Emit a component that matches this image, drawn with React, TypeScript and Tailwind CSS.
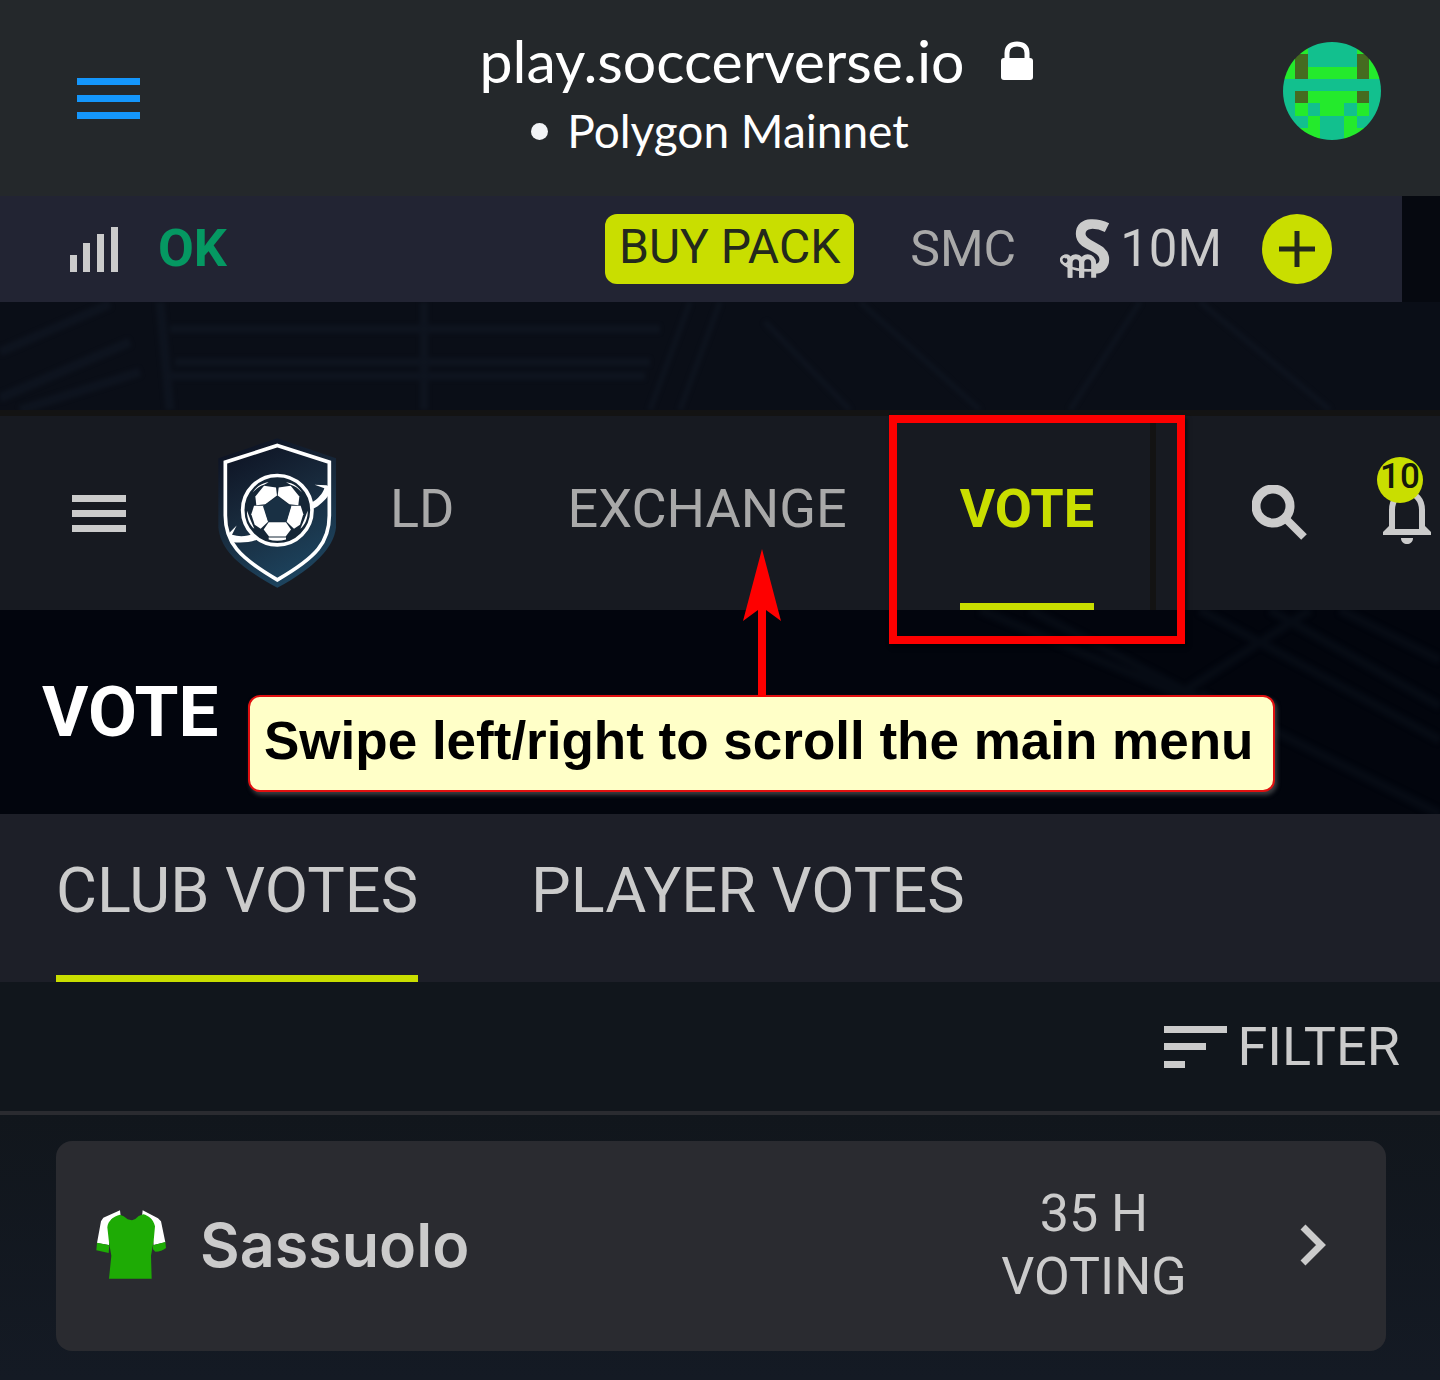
import React from "react";

function MenuLines({ className }: { className: string }) {
  return (
    <span className={className} aria-hidden="true">
      <span className="h-[7px] bg-current" />
      <span className="h-[7px] bg-current" />
      <span className="h-[7px] bg-current" />
    </span>
  );
}

const FILLS: Record<string, string> = { t: "#12c08e", g: "#24ea2c", o: "#456b20" };
const AVATAR = ["ggttttgg", "gottttog", "goggggog", "tttttttt", "toggggot", "tgtggtgt", "ttgttgtt", "tggttggt"];

function Avatar() {
  return (
    <svg viewBox="0 0 8 8" className="size-[98px] rounded-full" shapeRendering="crispEdges" aria-hidden="true">
      {AVATAR.map((row, y) =>
        row.split("").map((c, x) => <rect key={`${x}-${y}`} x={x} y={y} width="1" height="1" fill={FILLS[c]} />),
      )}
    </svg>
  );
}

function SignalIcon() {
  return (
    <svg viewBox="0 0 48 45" className="h-[45px] w-12" fill="#cbcbcb" aria-hidden="true">
      <rect x="0" y="28" width="7" height="17" />
      <rect x="13" y="16" width="7" height="29" />
      <rect x="27" y="7" width="7" height="38" />
      <rect x="41" y="0" width="7" height="45" />
    </svg>
  );
}

/* Currency emblem: a ribbon curve resting on three looped stems. */
function CoinIcon() {
  return (
    <svg viewBox="28 27 150 180" className="h-[60px] w-[50px]" fill="none" stroke="#cbcbcb" aria-hidden="true">
      <path
        d="M169 53C145 41 90 30 90 72C90 110 161 108 161 148C161 168 148 177 132 177"
        strokeWidth="29"
      />
      <path d="M134 180C100 184 54 178 35 158C24 144 42 132 52 144C60 156 46 168 38 160" strokeWidth="8" />
      <path d="M40 141C50 134 60 142 59 156V203" strokeWidth="11" />
      <path d="M58 203V160C58 134 93 134 93 160V203" strokeWidth="15" />
      <path d="M93 203V160C93 134 129 134 129 160V203" strokeWidth="15" />
    </svg>
  );
}

function ClubCrest() {
  return (
    <svg viewBox="84 38 354 449" className="h-[150px] w-[118px]" aria-hidden="true">
      <defs>
        <linearGradient id="crest" x1="0.2" y1="0" x2="0.6" y2="1">
          <stop offset="0" stopColor="#0d1222" />
          <stop offset="0.45" stopColor="#18293b" />
          <stop offset="1" stopColor="#1d4560" />
        </linearGradient>
      </defs>
      <path d="M262 38L438 98V305C432 365 375 425 262 487C150 425 92 375 85 305V98Z" fill="url(#crest)" />
      <path
        d="M262 60L418 110V270C418 350 380 395 262 463C145 395 106 350 106 270V110Z"
        fill="none"
        stroke="#fff"
        strokeWidth="11"
      />
      <circle cx="262" cy="254" r="104" fill="#152636" stroke="#fff" strokeWidth="11" />
      <g fill="#fff">
        <path d="M374 178L410 179L418 184V206C404 226 388 240 370 250L364 232C384 220 398 204 403 188Z" />
        <path d="M140 300L126 328C150 335 172 332 192 325L202 342C180 352 150 352 128 350L116 324Z" />
        <path d="M222 181L258 186L261 210L226 236L199 239L196 213Z" />
        <path d="M302 181L266 186L263 210L298 236L325 239L328 213Z" />
        <path d="M192 241L221 241L235 288L212 310L194 298L184 266Z" />
        <path d="M332 241L303 241L289 288L312 310L330 298L340 266Z" />
        <path d="M236 290L288 290L303 312L287 333L237 333L221 312Z" />
        <path d="M188 201C198 184 215 172 236 170L222 178C208 182 200 189 188 201Z" />
        <path d="M336 201C326 184 309 172 288 170L302 178C316 182 324 189 336 201Z" />
        <path d="M171 256L181 282L193 310C178 298 170 278 171 256Z" />
        <path d="M353 256L343 282L331 310C346 298 354 278 353 256Z" />
        <path d="M236 336L288 336V342C270 347 252 347 236 342Z" />
      </g>
      <path d="M262 213L304 242L290 289H234L219 242Z" fill="#193044" />
    </svg>
  );
}

function SearchIcon() {
  return (
    <svg viewBox="0 0 56 56" className="size-14" fill="none" stroke="#cbcbcb" aria-hidden="true">
      <circle cx="21" cy="21" r="17" strokeWidth="9" />
      <path d="M34 34L52 52" strokeWidth="8" />
    </svg>
  );
}

function BellIcon() {
  return (
    <svg viewBox="0 0 48 62" className="h-[62px] w-12" aria-hidden="true">
      <path d="M9 50V28C9 18 15 11 24 11S39 18 39 28V50" fill="none" stroke="#cbcbcb" strokeWidth="6" />
      <path d="M0 53V50L8 42V47H40V42L48 50V53Z" fill="#cbcbcb" />
      <path d="M18 56H30C30 60 27 62 24 62S18 60 18 56Z" fill="#cbcbcb" />
    </svg>
  );
}

function Shirt() {
  return (
    <svg viewBox="288 273 210 207" className="h-[69px] w-[70px]" aria-hidden="true">
      <path d="M360 274L310 296L303 307L291 372L327 378L335 300L362 292Z" fill="#fff" />
      <path d="M428 274L474 298L483 307L496 370L461 378L452 300L426 292Z" fill="#fff" />
      <path
        d="M360 287L371 292L383 301L396 304L406 300L416 291L430 286C445 290 460 300 465 322L461 365L453 410L455 479H327L334 410L327 370L322 325C324 305 340 292 360 287Z"
        fill="#1eab05"
      />
      <path d="M291 371L328 379L326 402L289 394Z" fill="#1eab05" />
      <path d="M459 379L496 369L498 387C490 394 478 398 466 398L459 391Z" fill="#1eab05" />
    </svg>
  );
}

/* Faint roof beams of a stadium behind the page. */
function StadiumBeams() {
  return (
    <svg
      viewBox="0 0 1440 108"
      preserveAspectRatio="none"
      className="absolute inset-0 size-full opacity-60"
      fill="none"
      stroke="#111824"
      aria-hidden="true"
    >
      <g className="blur-[2px]">
        <path d="M0 50L110 2M0 96L130 40M20 108L140 70M160 0L170 108" strokeWidth="9" />
        <path d="M170 27H660M175 60H650M170 74H645M424 0V108" strokeWidth="8" />
        <path d="M690 0L650 108M720 0L680 108M765 20L850 108M860 0L980 108M1140 0L1070 108M1200 0L1330 108" strokeWidth="5" />
      </g>
    </svg>
  );
}

function SeatBeams() {
  return (
    <svg
      viewBox="0 0 500 204"
      className="absolute top-0 right-0 h-full w-[500px]"
      fill="none"
      stroke="#060b14"
      strokeWidth="9"
      aria-hidden="true"
    >
      <path
        className="blur-[2px]"
        d="M40 0L240 84M90 0L290 104M240 84L370 0M260 0L500 130M330 0L500 96M260 84L500 204M400 0L500 50"
      />
    </svg>
  );
}

export default function App() {
  return (
    <div className="min-h-screen bg-[#11161c] font-['Roboto',sans-serif] text-[#cbcbcb]">
      <header className="grid h-[196px] grid-cols-[1fr_auto_1fr] items-center bg-[#24282b] text-white">
        <button aria-label="Browser menu" className="ml-[77px] w-[63px] text-[#1496fb]">
          <MenuLines className="flex w-full flex-col gap-[10px]" />
        </button>
        <div className="flex flex-col items-center pb-[6px] font-['Lato',sans-serif]">
          <div className="ml-[72px] flex items-center gap-9">
            <span className="text-[59px] leading-[72px]">play.soccerverse.io</span>
            <svg viewBox="0 0 32 40" className="h-10 w-8" aria-label="Secure" role="img">
              <path d="M6 17V12C6 6 10 3 16 3S26 6 26 12V17" fill="none" stroke="#fff" strokeWidth="5" />
              <rect y="17" width="32" height="22" rx="3" fill="#fff" />
            </svg>
          </div>
          <div className="flex items-center gap-[19px]">
            <span className="size-[17px] rounded-full bg-[#f2f4f6]" />
            <span className="text-[46px] leading-[68px]">Polygon Mainnet</span>
          </div>
        </div>
        <button aria-label="Account" className="mr-[59px] mb-[14px] justify-self-end">
          <Avatar />
        </button>
      </header>

      <div className="bg-[#060910] pr-[38px]">
        <div className="flex h-[106px] items-center bg-[#222433] pr-[70px] pl-[70px]">
          <SignalIcon />
          <span className="ml-10 text-[52px] leading-[60px] font-bold text-[#059862]">OK</span>
          <button className="ml-auto h-[70px] rounded-xl bg-[#c9de00] px-[14px] pb-1 text-[48px] leading-[60px] text-[#23291c]">
            BUY PACK
          </button>
          <span className="ml-14 text-[50px] leading-[60px] text-[#a9a9a9]">SMC</span>
          <span className="ml-11 flex items-center gap-[10px] text-[51px] leading-[60px]">
            <CoinIcon />
            10M
          </span>
          <button aria-label="Add funds" className="ml-10 grid size-[70px] place-items-center rounded-full bg-[#c9de00]">
            <svg viewBox="0 0 36 36" className="size-9" stroke="#23291c" strokeWidth="5" aria-hidden="true">
              <path d="M18 0V36M0 18H36" />
            </svg>
          </button>
        </div>
      </div>

      <div className="relative h-[114px] border-b-[6px] border-[#131313] bg-[#0a0e17]">
        <StadiumBeams />
      </div>

      <nav className="flex h-[194px] items-center bg-[#171a21] text-[#a9a9a9]">
        <button aria-label="Main menu" className="ml-[72px] w-[54px] shrink-0 text-[#cbcbcb]">
          <MenuLines className="flex w-full flex-col gap-2" />
        </button>
        <a href="#home" aria-label="Home" className="ml-[92px] shrink-0">
          <ClubCrest />
        </a>
        <div className="flex h-full flex-1 items-stretch gap-[113px] border-r-[6px] border-[#131313] pl-[54px] text-[54px] leading-[186px]">
          <a href="#world">LD</a>
          <a href="#exchange">EXCHANGE</a>
          <a href="#vote" aria-current="page" className="relative border-b-[7px] border-[#c9de00] font-bold text-[#c9de00]">
            VOTE
            <span className="pointer-events-none absolute -top-px -right-[91px] -bottom-[41px] -left-[71px] z-10 border-8 border-[#fe0000] shadow-[2px_3px_4px_rgba(0,0,0,0.6)]" />
          </a>
        </div>
        <button aria-label="Search" className="ml-24 shrink-0">
          <SearchIcon />
        </button>
        <button aria-label="10 notifications" className="relative mr-[9px] ml-[75px] shrink-0">
          <BellIcon />
          <span className="absolute -top-[25px] -left-[6px] grid size-[46px] place-items-center rounded-full bg-[#c9de00] pb-[6px] text-[35px] leading-[40px] font-medium text-[#15180b]">
            10
          </span>
        </button>
      </nav>

      <section className="relative flex h-[204px] items-center bg-[#02050d]">
        <SeatBeams />
        <h1 className="ml-[42px] w-[206px] text-[71px] leading-[80px] font-bold text-white">VOTE</h1>
        <div
          role="note"
          className="relative mt-[85px] mb-[22px] rounded-xl border-2 border-[#e01010] bg-[#ffffc8] pt-3 pr-5 pb-[17px] pl-[14px] font-['Liberation_Sans',sans-serif] text-[53px] leading-[64px] font-bold whitespace-nowrap text-black shadow-[2px_3px_4px_rgba(120,120,120,0.5)]"
        >
          Swipe left/right to scroll the main menu
          <svg viewBox="0 0 38 148" className="absolute bottom-full left-1/2 h-[148px] w-[38px] -translate-x-1/2" fill="#fe0000" aria-hidden="true">
            <path d="M19 0L38 72L23 61V148H15V61L0 72Z" />
          </svg>
        </div>
      </section>

      <div role="tablist" className="flex h-[168px] gap-[113px] bg-[#1d1f28] pl-14 text-[63px] leading-[147px]">
        <button role="tab" aria-selected="true" className="border-b-[7px] border-[#c9de00] pb-2">
          CLUB VOTES
        </button>
        <button role="tab" aria-selected="false" className="border-b-[7px] border-transparent pb-2">
          PLAYER VOTES
        </button>
      </div>

      <div className="flex h-[133px] items-center justify-end border-b-4 border-[#2a2b30] pr-10">
        <button className="flex items-center gap-[10px] text-[54px] leading-[60px]">
          <svg viewBox="0 0 63 42" className="h-[42px] w-[63px]" fill="currentColor" aria-hidden="true">
            <rect width="63" height="7" />
            <rect y="17" width="42" height="7" />
            <rect y="35" width="21" height="7" />
          </svg>
          FILTER
        </button>
      </div>

      <main className="bg-linear-to-b from-[#11161c] to-[#141a24] pt-[26px] pr-[54px] pb-[29px] pl-14">
        <a href="#sassuolo" className="flex h-[210px] items-center rounded-2xl bg-[#2a2b30] pr-[60px] pb-[3px] pl-10">
          <Shirt />
          <span className="ml-[34px] font-['Inter',sans-serif] text-[61px] leading-[72px] font-semibold">Sassuolo</span>
          <span className="ml-auto w-[186px] text-center text-[52px] leading-[63px]">
            35 H<br />
            VOTING
          </span>
          <svg viewBox="0 0 26 42" className="ml-[113px] h-[42px] w-[26px]" fill="none" stroke="currentColor" strokeWidth="7" aria-hidden="true">
            <path d="M3 3L21 21L3 39" />
          </svg>
        </a>
      </main>
    </div>
  );
}
